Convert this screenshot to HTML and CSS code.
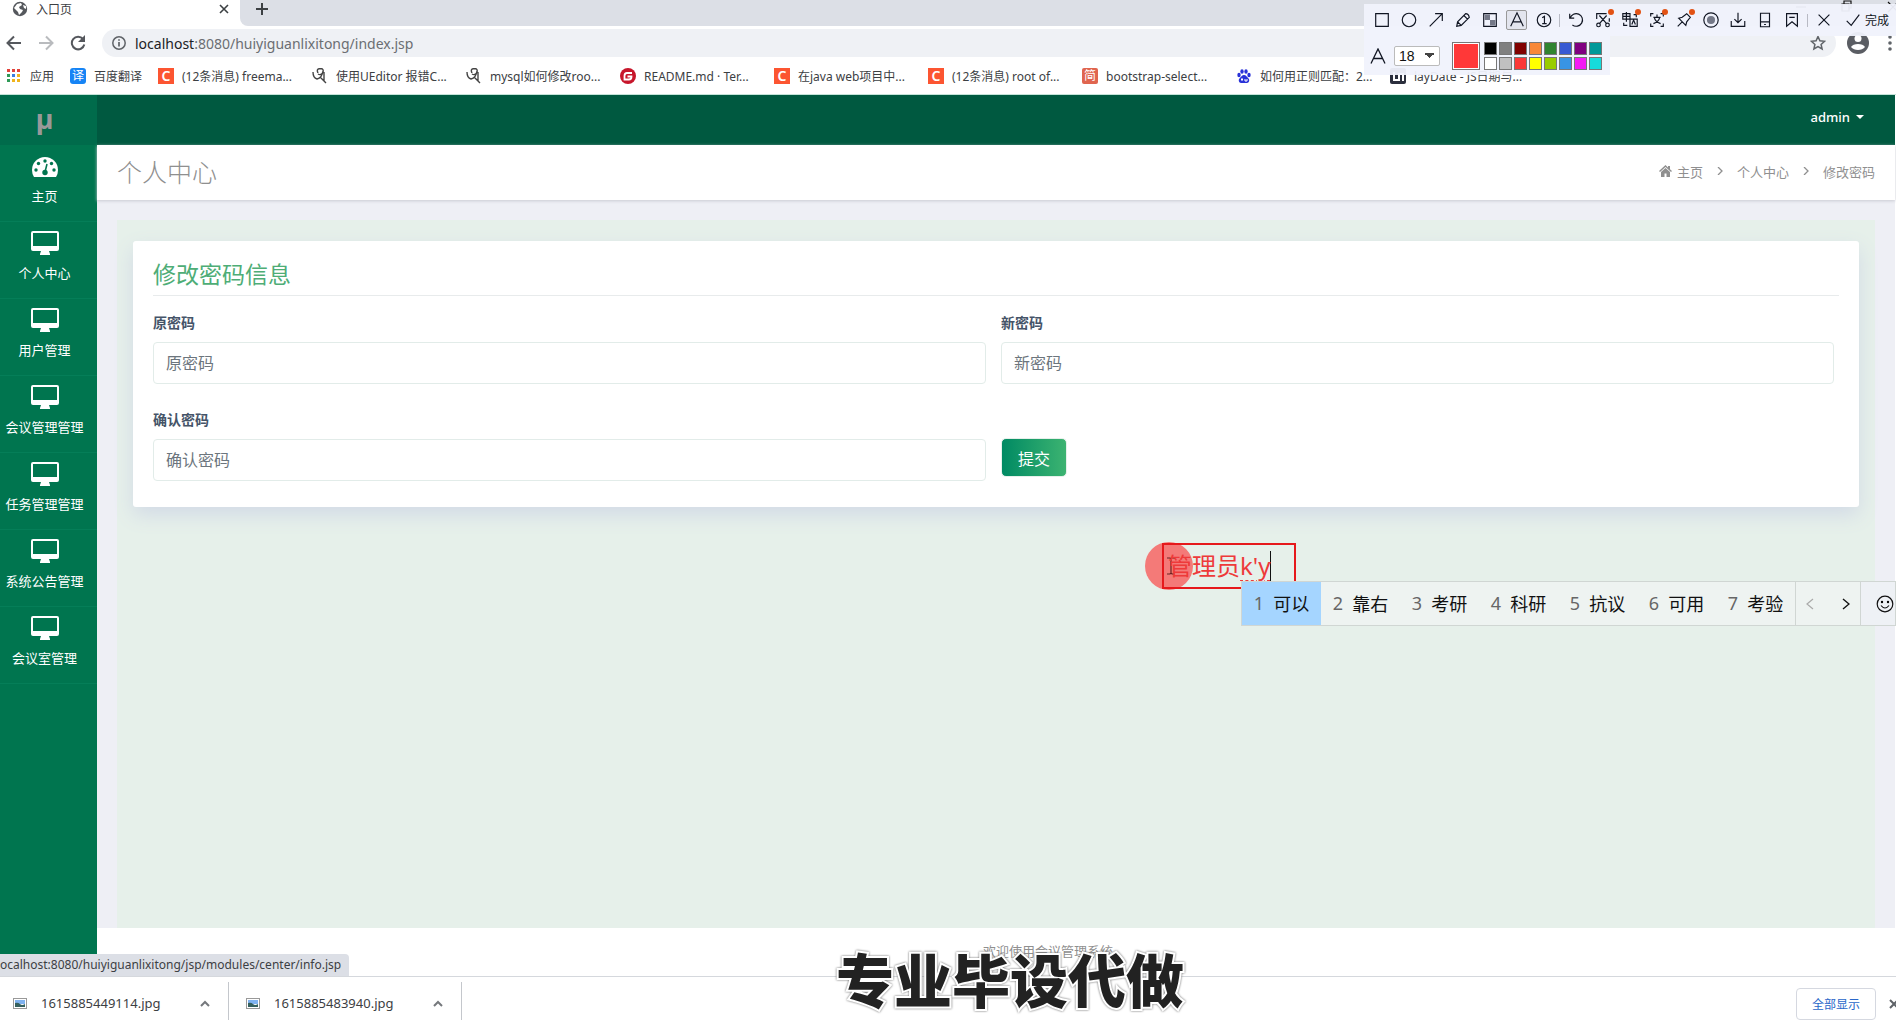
FILE: index.html
```html
<!DOCTYPE html>
<html lang="zh-CN">
<head>
<meta charset="utf-8">
<title>入口页</title>
<link rel="stylesheet" href="styles.css">
</head>
<body>
<svg class="defs" width="0" height="0" aria-hidden="true">
  <symbol id="desktop" viewBox="0 0 28 24"><path fill="currentColor" fill-rule="evenodd" d="M2 0h24a2 2 0 0 1 2 2v16a2 2 0 0 1-2 2h-8l1 3v1H9v-1l1-3H2a2 2 0 0 1-2-2V2a2 2 0 0 1 2-2zm0 2v13h24V2z"/></symbol>
  <symbol id="knot" viewBox="0 0 16 16"><path d="M1 4q0 6 4 7 5-1 6-8M6 5q-2-4 2-4.500 4 0 3 3.500-2 4-5 2M12 4v9l2 2M8 9l6 6" fill="none" stroke="#444" stroke-width="1.400"/></symbol>
  <symbol id="chev" viewBox="0 0 10 7"><path d="M1 6l4-4 4 4" fill="none" stroke="#75787c" stroke-width="2"/></symbol>
  <symbol id="photo" viewBox="0 0 14 11"><path fill="#999" d="M0 0h14v11H0z"/><path fill="#fff" d="M1 1h12v9H1z"/><path fill="#7fb2f0" d="M2 2h10v4H2z"/><path fill="#35605e" d="M2 5q3-1 5 1t5 0v3H2z"/></symbol>
</svg>

<header class="browser">
  <div class="tabs">
    <div class="tab">
      <svg width="16" height="16" viewBox="0 0 16 16"><circle cx="8" cy="8" r="7.2" fill="#55585d"/><path d="M2 7l3-4 4-1 1 2-3 2 1 2 3 1-1 2-3 3-1-3-2-2zM11 4l3 1v3l-2-1z" fill="#fff"/></svg>
      <span class="tab-title">入口页</span>
      <button class="plain" aria-label="关闭标签页"><svg width="10" height="10" viewBox="0 0 10 10"><path d="M1 1l8 8M9 1l-8 8" stroke="#3c4043" stroke-width="1.6"/></svg></button>
    </div>
    <div class="tab-rest">
      <button class="plain" aria-label="新标签页"><svg width="12" height="12" viewBox="0 0 12 12"><path d="M6 0v12M0 6h12" stroke="#3c4043" stroke-width="2"/></svg></button>
      <div class="window-buttons">
        <svg width="100" height="14" viewBox="0 0 100 14"><path d="M0 7h10M46 4h7v7h-7zM48 4V1h7v7h-2M92 2l10 10M102 2L92 12" fill="none" stroke="#111" stroke-width="1.2"/></svg>
      </div>
    </div>
  </div>
  <div class="address-row">
    <button class="plain" aria-label="后退"><svg width="16" height="16" viewBox="0 0 16 16"><path d="M15 8H2M8 1.500L1.500 8 8 14.500" fill="none" stroke="#55585d" stroke-width="2"/></svg></button>
    <button class="plain" aria-label="前进"><svg width="16" height="16" viewBox="0 0 16 16"><path d="M1 8h13M8 1.500L14.500 8 8 14.500" fill="none" stroke="#b9bbbe" stroke-width="2"/></svg></button>
    <button class="plain" aria-label="刷新"><svg width="16" height="16" viewBox="0 0 16 16"><path d="M13 4A6.300 6.300 0 1 0 14.300 9.500" fill="none" stroke="#55585d" stroke-width="2"/><path d="M15 0v7H8z" fill="#55585d"/></svg></button>
    <div class="url">
      <svg width="14" height="14" viewBox="0 0 14 14"><circle cx="7" cy="7" r="6.200" fill="none" stroke="#5f6368" stroke-width="1.500"/><path d="M7 6v4.500M7 3.300v1.500" stroke="#5f6368" stroke-width="1.700"/></svg>
      <span class="url-text"><b>localhost</b>:8080/huiyiguanlixitong/index.jsp</span>
      <svg width="16" height="16" viewBox="0 0 16 16"><path d="M8 1.500l1.900 4.300 4.700.5-3.500 3.100 1 4.600L8 11.600 3.900 14l1-4.600L1.400 6.300l4.700-.5z" fill="none" stroke="#5f6368" stroke-width="1.500"/></svg>
    </div>
    <svg width="22" height="22" viewBox="0 0 22 22"><circle cx="11" cy="11" r="11" fill="#5a5d63"/><circle cx="11" cy="6.500" r="3.500" fill="#fff"/><path d="M4 15c2-4 12-4 14 0-3 4-11 4-14 0z" fill="#fff"/></svg>
    <svg class="menu-dots" width="4" height="16" viewBox="0 0 4 16"><g fill="#5f6368"><circle cx="2" cy="2" r="1.800"/><circle cx="2" cy="8" r="1.800"/><circle cx="2" cy="14" r="1.800"/></g></svg>
  </div>
  <nav class="bookmarks">
    <a class="mark mark-apps" href="#"><svg width="14" height="14" viewBox="0 0 14 14"><path fill="#e2433b" d="M0 0h3v3H0zM5 0h3v3H5zM10 0h3v3h-3z"/><path fill="#2f9a57" d="M0 5h3v3H0zM0 10h3v3H0z"/><path fill="#3b7de0" d="M5 5h3v3H5z"/><path fill="#f0b41c" d="M10 5h3v3h-3zM5 10h3v3H5zM10 10h3v3h-3z"/></svg>应用</a>
    <a class="mark mark-short" href="#"><span class="fav fav-blue">译</span>百度翻译</a>
    <a class="mark" href="#"><span class="fav fav-c">C</span>(12条消息) freema...</a>
    <a class="mark" href="#"><svg width="16" height="16"><use href="#knot"/></svg>使用UEditor 报错C...</a>
    <a class="mark" href="#"><svg width="16" height="16"><use href="#knot"/></svg>mysql如何修改roo...</a>
    <a class="mark" href="#"><svg width="16" height="16" viewBox="0 0 16 16"><circle cx="8" cy="8" r="8" fill="#c7162b"/><path d="M12 5H7Q4.500 5 4.500 8v3.500H9q2.500 0 2.500-3H7.500" fill="none" stroke="#fff" stroke-width="1.800"/></svg>README.md · Ter...</a>
    <a class="mark" href="#"><span class="fav fav-c">C</span>在java web项目中...</a>
    <a class="mark" href="#"><span class="fav fav-c">C</span>(12条消息) root of...</a>
    <a class="mark" href="#"><span class="fav fav-jian">简</span>bootstrap-select...</a>
    <a class="mark" href="#"><svg width="16" height="16" viewBox="0 0 16 16"><g fill="#2932d8"><ellipse cx="3" cy="7" rx="1.700" ry="2.200"/><ellipse cx="6" cy="3.500" rx="1.700" ry="2.300"/><ellipse cx="10" cy="3.500" rx="1.700" ry="2.300"/><ellipse cx="13" cy="7" rx="1.700" ry="2.200"/><path d="M8 7c2 0 3 2 4.500 3.500S13 15 11 15H5c-2 0-3-3-1.500-4.500S6 7 8 7z"/></g><path d="M6 10v3M7 11.500h-2M9 11v2h2v-2" stroke="#fff" fill="none"/></svg>如何用正则匹配：2...</a>
    <a class="mark" href="#"><svg width="16" height="16" viewBox="0 0 16 16"><rect width="16" height="16" rx="2" fill="#2b2f3d"/><path d="M4 4v8h4M9 13V6h4v7" fill="none" stroke="#fff" stroke-width="2"/></svg>layDate - JS日期与...</a>
  </nav>
</header>

<div class="app">
  <aside class="sidebar">
    <a class="logo" href="#">µ</a>
    <nav class="side-nav">
      <a href="#"><svg width="28" height="24" viewBox="-1 0 28 24"><path fill="currentColor" d="M13 3a13 13 0 0 1 13 13q0 4-2 7H2q-2-3-2-7A13 13 0 0 1 13 3z"/><g fill="#00754f"><circle cx="4" cy="16" r="1.700"/><circle cx="6.500" cy="9.500" r="1.700"/><circle cx="13" cy="7" r="1.700"/><circle cx="19.500" cy="9.500" r="1.700"/><circle cx="22" cy="16" r="1.700"/><circle cx="13" cy="18.500" r="2.700"/></g><path d="M13 18l2-8" stroke="#00754f" stroke-width="1.500"/></svg><span>主页</span></a>
      <a href="#"><svg width="28" height="24"><use href="#desktop"/></svg><span>个人中心</span></a>
      <a href="#"><svg width="28" height="24"><use href="#desktop"/></svg><span>用户管理</span></a>
      <a href="#"><svg width="28" height="24"><use href="#desktop"/></svg><span>会议管理管理</span></a>
      <a href="#"><svg width="28" height="24"><use href="#desktop"/></svg><span>任务管理管理</span></a>
      <a href="#"><svg width="28" height="24"><use href="#desktop"/></svg><span>系统公告管理</span></a>
      <a href="#"><svg width="28" height="24"><use href="#desktop"/></svg><span>会议室管理</span></a>
    </nav>
  </aside>
  <div class="page">
    <div class="topbar"><button class="user">admin<span class="caret"></span></button></div>
    <div class="title-row">
      <h1>个人中心</h1>
      <nav class="crumbs">
        <a href="#"><svg width="13" height="12" viewBox="0 0 13 12"><path fill="#8f8f8f" d="M6.500 0L0 6l1 1 5.500-5L12 7l1-1-2-1.800V1H9v1.400zM6.500 3L2 7v5h3.500V8.500h2V12H11V7z"/></svg>主页</a>
        <svg width="6" height="8" viewBox="0 0 6 8"><path d="M1 0l4 4-4 4" fill="none" stroke="#8f8f8f" stroke-width="1.300"/></svg>
        <a href="#">个人中心</a>
        <svg width="6" height="8" viewBox="0 0 6 8"><path d="M1 0l4 4-4 4" fill="none" stroke="#8f8f8f" stroke-width="1.300"/></svg>
        <span>修改密码</span>
      </nav>
    </div>
    <main class="content">
      <div class="panel">
        <section class="card">
          <h2>修改密码信息</h2>
          <form class="form">
            <div class="field"><label for="old">原密码</label><input id="old" type="password" placeholder="原密码"></div>
            <div class="field"><label for="new">新密码</label><input id="new" type="password" placeholder="新密码"></div>
            <div class="field"><label for="again">确认密码</label><input id="again" type="password" placeholder="确认密码"></div>
            <div class="action"><button class="submit" type="button">提交</button></div>
          </form>
        </section>
      </div>
    </main>
    <footer class="footer">欢迎使用会议管理系统</footer>
  </div>
  <div class="status">ocalhost:8080/huiyiguanlixitong/jsp/modules/center/info.jsp</div>
</div>

<div class="downloads">
  <div class="download"><svg width="14" height="11"><use href="#photo"/></svg><span>1615885449114.jpg</span><button class="plain" aria-label="更多"><svg width="10" height="7"><use href="#chev"/></svg></button></div>
  <div class="download"><svg width="14" height="11"><use href="#photo"/></svg><span>1615885483940.jpg</span><button class="plain" aria-label="更多"><svg width="10" height="7"><use href="#chev"/></svg></button></div>
  <button class="show-all">全部显示</button>
  <button class="plain close-bar" aria-label="关闭"><svg width="10" height="10" viewBox="0 0 10 10"><path d="M1 1l8 8M9 1l-8 8" stroke="#5f6368" stroke-width="2"/></svg></button>
</div>

<div class="tools">
  <div class="tool-row">
    <button aria-label="矩形"><svg viewBox="0 0 20 20"><path d="M3 3h14v14H3z"/></svg></button>
    <button aria-label="椭圆"><svg viewBox="0 0 20 20"><circle cx="10" cy="10" r="7.500"/></svg></button>
    <button aria-label="箭头"><svg viewBox="0 0 20 20"><path d="M3 17L17 3M9 3h8v8"/></svg></button>
    <button aria-label="画笔"><svg viewBox="0 0 20 20"><path d="M3 17l1-5 9-9q3 0 4 4l-9 9zM11 5l4 4M4 12l4 4"/></svg></button>
    <button aria-label="马赛克"><svg viewBox="0 0 20 20"><path d="M3 3h14v14H3z"/><path class="solid" d="M4 4h6v6H4zM10 10h6v6h-6z"/></svg></button>
    <button class="on" aria-label="文字"><svg viewBox="0 0 20 20"><path d="M3 17l7-15 7 15M5.500 12h9"/></svg></button>
    <button aria-label="序号"><svg viewBox="0 0 20 20"><circle cx="10" cy="10" r="7.500"/><path d="M8 7.500L10.500 6v8M8 14h5"/></svg></button>
    <i class="bar"></i>
    <button aria-label="撤销"><svg viewBox="0 0 20 20"><path d="M3 3v5h5M3.500 8A7 7 0 1 1 6 15.500"/></svg></button>
    <button class="dot" aria-label="截图"><svg viewBox="0 0 20 20"><path d="M3 9V3h11M17 8v4M6 5l8 9M14 5l-8 9"/><circle cx="5" cy="15.500" r="2"/><circle cx="15" cy="15.500" r="2"/></svg></button>
    <button class="dot" aria-label="翻译"><svg viewBox="0 0 20 20"><path d="M2 3h8v6H2zM6 1v11M2 6h8M10 9h8v8h-8zM12 15l2-5 2 5M3 13v3h4M14 4h3v3"/></svg></button>
    <button class="dot" aria-label="识别"><svg viewBox="0 0 20 20"><path d="M6 3H3v3M3 14v3h3M14 17h3v-3M14 3h3v3M6 7h8M10 4v3M13 7q-1 5-7 7M7 7q1 5 7 7"/></svg></button>
    <button class="dot" aria-label="固定"><svg viewBox="0 0 20 20"><path d="M3 17l5-5M4 8l8 8 1-4 4-5-4-4-5 4z"/></svg></button>
    <button aria-label="录制"><svg viewBox="0 0 20 20"><circle cx="10" cy="10" r="8"/><circle class="solid" cx="10" cy="10" r="4.500"/></svg></button>
    <button aria-label="下载"><svg viewBox="0 0 20 20"><path d="M10 2v11M6 9l4 4 4-4M2.500 11v6h15v-6"/></svg></button>
    <button aria-label="手机"><svg viewBox="0 0 20 20"><path d="M5 2.500h10v15H5zM5 12h10M9 15h2"/></svg></button>
    <button aria-label="收藏"><svg viewBox="0 0 20 20"><path d="M4 3h12v14l-6-5-6 5zM7 7h6"/></svg></button>
    <i class="bar"></i>
    <button aria-label="取消"><svg viewBox="0 0 20 20"><path d="M4 4l12 12M16 4L4 16"/></svg></button>
    <button class="done"><svg viewBox="0 0 20 20"><path d="M3 11l5 5L17 4"/></svg>完成</button>
  </div>
  <div class="tool-options">
    <svg width="16" height="16" viewBox="0 0 16 16"><path d="M1 15.500L8 1l7 14.500M3.500 10.500h9" fill="none" stroke="#101522" stroke-width="1.300"/></svg>
    <select aria-label="字号"><option>18</option></select>
    <span class="current"></span>
    <div class="swatches">
      <i class="s1"></i><i class="s2"></i><i class="s3"></i><i class="s4"></i><i class="s5"></i><i class="s6"></i><i class="s7"></i><i class="s8"></i>
      <i class="s9"></i><i class="s10"></i><i class="s11"></i><i class="s12"></i><i class="s13"></i><i class="s14"></i><i class="s15"></i><i class="s16"></i>
    </div>
  </div>
</div>

<div class="pointer"><svg width="8" height="18" viewBox="0 0 8 18"><path d="M0 1h3l1 1 1-1h3M4 2v14M0 17h3l1-1 1 1h3" fill="none" stroke="#6b2320" stroke-width="1.200"/></svg></div>
<div class="note"><span>管理员</span><span class="typing">k'y</span></div>

<div class="ime">
  <button class="cand chosen"><em>1</em>可以</button>
  <button class="cand"><em>2</em>靠右</button>
  <button class="cand"><em>3</em>考研</button>
  <button class="cand"><em>4</em>科研</button>
  <button class="cand"><em>5</em>抗议</button>
  <button class="cand"><em>6</em>可用</button>
  <button class="cand"><em>7</em>考验</button>
  <div class="pager">
    <button class="plain" aria-label="上一页"><svg width="8" height="12" viewBox="0 0 8 12"><path d="M7 1L1 6l6 5" fill="none" stroke="#aaa" stroke-width="1.200"/></svg></button>
    <button class="plain" aria-label="下一页"><svg width="8" height="12" viewBox="0 0 8 12"><path d="M1 1l6 5-6 5" fill="none" stroke="#111" stroke-width="1.400"/></svg></button>
  </div>
  <button class="emoji" aria-label="表情"><svg width="18" height="18" viewBox="0 0 18 18"><circle cx="9" cy="9" r="7.800" fill="none" stroke="#111" stroke-width="1.200"/><path d="M5 10.500q4 5 8 0" fill="none" stroke="#111" stroke-width="1.200"/><circle cx="6" cy="7" r="1.200"/><circle cx="12" cy="7" r="1.200"/></svg></button>
</div>

<div class="caption">专业毕设代做</div>
</body>
</html>
```
FILE: styles.css
```css
* { box-sizing: border-box; }
body {
  margin: 0;
  min-height: 100vh;
  display: flex;
  flex-direction: column;
  position: relative;
  overflow: hidden;
  background: #fff;
  font-family: "Noto Sans", "Noto Sans CJK SC", sans-serif;
  font-size: 13px;
  color: #3c4043;
}
a { color: inherit; text-decoration: none; }
button { font-family: inherit; cursor: pointer; }
svg { display: block; flex: none; }
.defs { position: absolute; }
.plain { display: flex; padding: 0; border: 0; background: none; }

/* browser frame */
.browser { border-bottom: 1px solid #c3e3d8; }
.tabs { display: flex; height: 26px; background: #fff; }
.tab { width: 240px; display: flex; align-items: center; gap: 8px; padding: 0 11px 8px 12px; }
.tab-title { flex: 1; font-size: 12px; }
.tab-rest { flex: 1; display: flex; justify-content: space-between; background: #dcdfe6; border-bottom-left-radius: 8px; padding: 3px 0 0 16px; }
.window-buttons { margin-top: -3px; }
.address-row { display: flex; align-items: center; gap: 16px; height: 36px; padding: 0 4px 2px 6px; }
.url { flex: 1; display: flex; align-items: center; gap: 9px; height: 28px; margin-right: -5px; padding: 0 10px; border-radius: 14px; background: #eff1f5; }
.url-text { flex: 1; font-size: 14px; color: #6b6e72; }
.url-text b { font-weight: 400; color: #202124; }
.menu-dots { margin-left: 3px; }
.bookmarks { display: flex; height: 32px; padding: 0 0 4px 7px; }
.mark { width: 154px; flex: none; display: flex; align-items: center; gap: 8px; font-size: 12px; white-space: nowrap; }
.mark-apps { width: 63px; gap: 9px; }
.mark-short { width: 88px; }
.fav { width: 16px; height: 16px; line-height: 16px; text-align: center; color: #fff; font-size: 12px; }
.fav-blue { background: #1684f5; border-radius: 3px; }
.fav-c { background: #fc5531; font-size: 14px; font-weight: 600; }
.fav-jian { background: #e0654f; border-radius: 2px; }

/* application */
.app { flex: 1; display: flex; position: relative; margin-right: 1px; }
.sidebar { width: 97px; flex: none; margin-bottom: 21px; background: #00754f; }
.logo { display: flex; justify-content: center; align-items: center; height: 50px; padding: 0 8px 4px 0; background: #006b4b; color: #999; font-size: 27px; font-weight: 700; }
.side-nav a { display: flex; flex-direction: column; align-items: center; gap: 9px; height: 77px; padding: 9px 8px 0 0; border-bottom: 1px solid #057e58; color: #fff; white-space: nowrap; }
.side-nav span { line-height: 18px; }
.page { flex: 1; display: flex; flex-direction: column; }
.topbar { display: flex; justify-content: flex-end; height: 50px; padding: 0 31px; background: #005940; }
.user { display: flex; align-items: center; gap: 6px; height: 44px; padding: 0; border: 0; background: none; color: #fff; font-size: 13px; font-weight: 500; }
.caret { border: 4px solid transparent; border-top-color: #fff; border-bottom: 0; }
.title-row { position: relative; display: flex; align-items: center; justify-content: space-between; height: 55px; padding: 0 20px 3px; background: #fff; box-shadow: 0 1px 3px #c9cad2; }
h1 { margin: 0; font-size: 25px; font-weight: 300; color: #8f8f8f; }
.crumbs { display: flex; align-items: center; gap: 14px; color: #8f8f8f; }
.crumbs a { display: flex; align-items: center; gap: 5px; }
.content { flex: 1; display: flex; padding: 20px 20px 0; background: #eeeff5; }
.panel { flex: 1; padding: 21px 16px; background: #e6f0ea; }
.card { padding: 20px; border-radius: 3px; background: #fff; box-shadow: 0 8px 20px #d2dae6; }
h2 { margin: 0; height: 35px; line-height: 26px; border-bottom: 1px solid #e8ebec; font-size: 23px; font-weight: 400; color: #4ead76; }
.form { display: grid; grid-template-columns: 1fr 1fr; gap: 24px 15px; padding: 15px 5px 6px 0; }
.field { display: flex; flex-direction: column; gap: 8px; }
.field label { line-height: 23px; font-size: 14px; font-weight: 700; color: #455468; }
.field input { width: 100%; height: 42px; padding: 0 12px; border: 1px solid #e2ece9; border-radius: 4px; background: #fff; font-family: inherit; font-size: 16px; }
.field input::placeholder { color: #6c757d; }
.action { padding-top: 30px; }
.submit { width: 66px; height: 39px; padding: 0; border: 1px solid #e6f0ea; border-radius: 5px; background: linear-gradient(to right, #008a63, #3cb371); color: #fff; font-size: 16px; }
.footer { height: 48px; line-height: 46px; text-align: center; padding-left: 104px; background: #fff; color: #8f8f8f; }
.status { position: absolute; left: 0; bottom: 0; height: 22px; line-height: 22px; padding: 0 8px 0 0; border-top-right-radius: 4px; background: #dcdfe6; font-size: 12px; }

/* download bar */
.downloads { display: flex; align-items: center; height: 44px; border-top: 1px solid #d5d8dd; }
.download { display: flex; align-items: center; align-self: flex-end; width: 229px; height: 38px; padding: 4px 18px 0 13px; border-right: 1px solid #c4c7cc; }
.download + .download { width: 233px; padding-left: 17px; }
.download span { flex: 1; padding-left: 14px; }
.show-all { width: 80px; height: 32px; margin: 10px 13px 0 auto; border: 1px solid #d5d8e0; border-radius: 4px; background: #fff; color: #2a67c9; font-size: 12px; }
.close-bar { margin: 10px -3px 0 0; }

/* screenshot tool, floats over the browser */
.tools { position: absolute; top: 4px; right: 0; width: 532px; }
.tool-row { display: flex; align-items: center; height: 32px; padding-left: 4px; background: #f0f2fcf2; }
.tool-row button { position: relative; flex: none; display: flex; align-items: center; justify-content: center; width: 27px; height: 20px; padding: 0; border: 0; background: none; color: #101522; }
.tool-row svg { width: 18px; height: 18px; fill: none; stroke: #101522; stroke-width: 1.3; }
.tool-row .solid { fill: #747887; stroke: none; }
.tool-row .on { width: 21px; margin: 0 3px; border: 1px solid #999; border-radius: 2px; background: #e3e5ee; }
.tool-row .dot::after { content: ""; position: absolute; top: -1px; right: 2px; width: 6px; height: 6px; border-radius: 50%; background: #e25214; }
.bar { width: 1px; height: 13px; margin: 0 2px; background: #b8bac4; }
.tool-row .done { flex: 1; gap: 3px; font-size: 12px; white-space: nowrap; }
.tool-options { display: flex; align-items: center; width: 246px; height: 39px; padding: 0 6px; background: #f0f2fcf2; }
.tool-options select { width: 46px; height: 20px; margin: 0 12px 0 8px; padding: 0 4px; border: 1px solid #bbb; border-radius: 2px; appearance: none; background: conic-gradient(from -50deg at 50% 100%, #fff 0 0) #fff; font-family: "Liberation Sans", sans-serif; font-size: 14px; color: #111; }
.tool-options select { background: conic-gradient(from 310deg at 50% 100%, #444 100deg, #fff 0) no-repeat right 5px center / 9px 5px #fff; }
.current { width: 28px; height: 28px; border: 1px solid #777; background: #ff3838; box-shadow: inset 0 0 0 1px #fff; }
.swatches { display: grid; grid-template-columns: repeat(8, 13px); gap: 2px; margin-left: 4px; }
.swatches i { height: 13px; border: 1px solid #777; }
.s1 { background: #000; } .s2 { background: #808080; } .s3 { background: #800000; } .s4 { background: #f88838; }
.s5 { background: #308430; } .s6 { background: #385ad3; } .s7 { background: #800080; } .s8 { background: #009999; }
.s9 { background: #fff; } .s10 { background: #c0c0c0; } .s11 { background: #fb3838; } .s12 { background: #ffff00; }
.s13 { background: #99cc00; } .s14 { background: #3894e4; } .s15 { background: #f31bf3; } .s16 { background: #16dcdc; }

/* annotation and input method popup */
.pointer { position: absolute; left: 1145px; top: 542px; display: flex; align-items: center; justify-content: center; width: 48px; height: 48px; padding-left: 4px; border-radius: 50%; background: #f47a78; }
.note { position: absolute; left: 1162px; top: 543px; display: flex; align-items: center; width: 134px; height: 46px; padding-left: 4px; border: 2px solid #e6191c; color: #ee3a3a; font-size: 24px; white-space: nowrap; }
.note span { line-height: 30px; }
.note .typing { border-right: 1px solid #111; text-decoration: underline dashed 1px; text-underline-offset: 5px; }
.ime { position: absolute; left: 1241px; right: 0; top: 581px; display: flex; height: 45px; overflow: hidden; border: 1px solid #d0d6d3; background: #eef3f1; }
.cand { flex: none; display: flex; align-items: center; justify-content: center; gap: 9px; width: 79px; padding: 0 0 2px; border: 0; background: none; color: #111; font-size: 18px; }
.cand em { font-style: normal; color: #666; }
.chosen { background: #a5d5ff; }
.pager { flex: none; width: 66px; display: flex; align-items: center; justify-content: space-between; padding: 0 10px; border: solid #d0d6d3; border-width: 0 1px; }
.emoji { flex: none; width: 35px; display: flex; align-items: center; justify-content: flex-end; padding: 0 2px; border: 0; background: #eef1f5; }

.caption { position: absolute; left: 836px; bottom: 12px; line-height: 60px; font-family: "Noto Sans CJK SC", sans-serif; font-size: 58px; font-weight: 900; color: #222; white-space: nowrap; -webkit-text-stroke: 4px #fff; paint-order: stroke fill; filter: drop-shadow(0 0 1px #666); }
```
